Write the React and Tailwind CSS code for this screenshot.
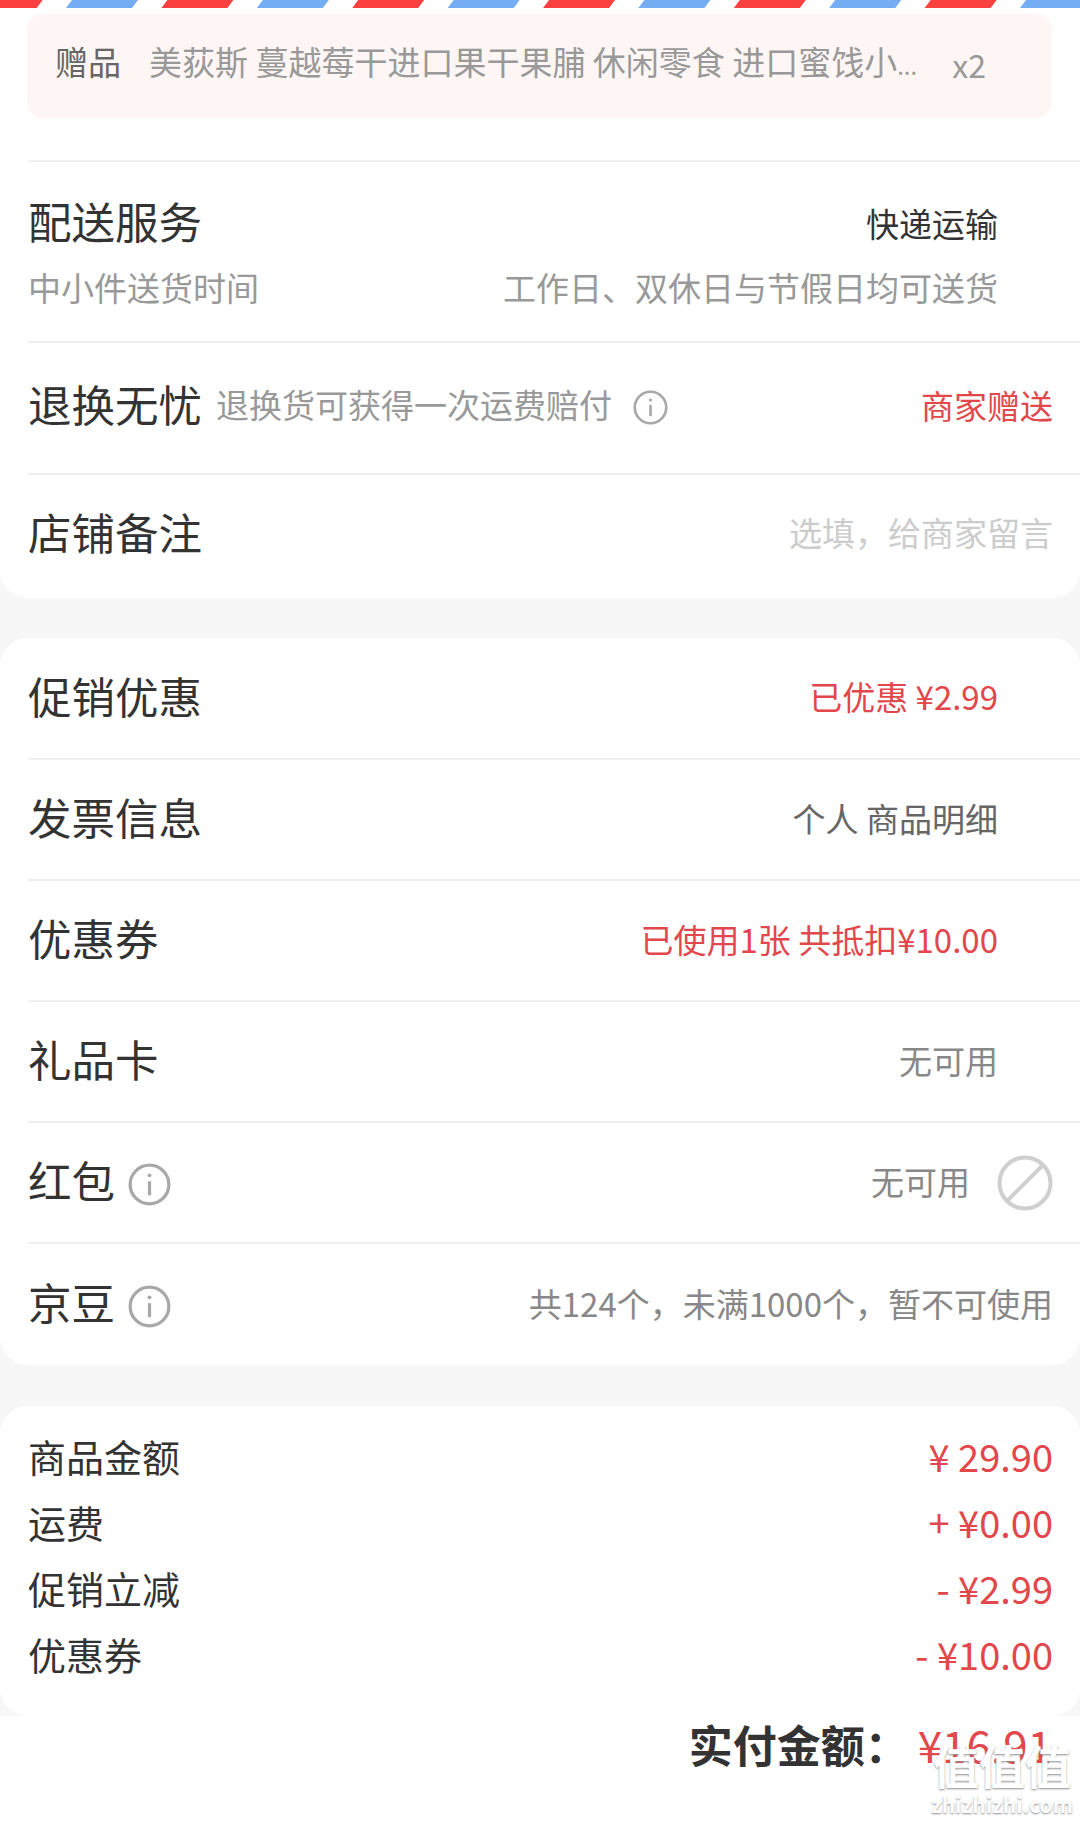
const FONT = "font-['Noto_Sans_CJK_SC','Noto_Sans',sans-serif]";
const RED = "text-[#e2474b]";

function Info({ className = "" }) {
  return (
    <svg viewBox="0 0 40 40" className={className} fill="none" stroke="#a8a8a8">
      <circle cx="20" cy="20" r="18" strokeWidth="3" />
      <path d="M20 17v13" strokeWidth="3" />
      <circle cx="20" cy="11.5" r="1.8" fill="#a8a8a8" stroke="none" />
    </svg>
  );
}

function Banned() {
  return (
    <svg viewBox="0 0 56 56" className="ml-[27px] mt-[3px] h-[56px] w-[56px]" fill="none" stroke="#cfcfcf" strokeWidth="4">
      <circle cx="28" cy="28" r="25.5" />
      <path d="M11 45 45 11" />
    </svg>
  );
}

function Stripes() {
  const items = [];
  for (let i = -1; i < 12; i++) {
    const x = 66 + (i - 1) * 95.4;
    items.push(
      <polygon
        key={i}
        points={`${x},8 ${x + 66},8 ${x + 72},0 ${x + 6},0`}
        fill={i % 2 === 0 ? "#fb4040" : "#74adf3"}
      />
    );
  }
  return (
    <svg viewBox="0 0 1080 8" className="block h-[8px] w-full">
      {items}
    </svg>
  );
}

function Row({ title, titleExtra, value, valueClass = "text-[#888888]", pr = "pr-[82px]", h = "h-[121px]", pb = "pb-[5px]", border = true, children }) {
  return (
    <div className={`ml-[28px] flex items-center justify-between ${h} ${pr} ${pb} ${border ? "border-t-[2px] border-[#efefef]" : ""}`}>
      <div className="flex items-center">
        <span className="text-[43.5px] leading-none text-[#333333]">{title}</span>
        {titleExtra}
      </div>
      <div className="mt-[2px] flex items-center">
        <span className={`text-[33px] leading-none ${valueClass}`}>{value}</span>
        {children}
      </div>
    </div>
  );
}

function Amount({ label, value }) {
  return (
    <div className="flex h-[66px] items-center justify-between">
      <span className="text-[38px] leading-none text-[#333333]">{label}</span>
      <span className={`text-[38px] leading-none ${RED}`}>{value}</span>
    </div>
  );
}

export default function App() {
  const infoIcon = <Info className="ml-[13px] mt-[8px] h-[43px] w-[43px]" />;

  return (
    <div className={`relative h-[1822px] w-[1080px] overflow-hidden bg-[#f7f7f7] ${FONT}`}>
      <div className="rounded-b-[28px] bg-white">
        <Stripes />
        <div className="ml-[27px] mr-[28px] mt-[6px] flex h-[104px] items-center rounded-[16px] bg-[#fdf6f5] pb-[9px] pl-[28px] pr-[66px] text-[33px] leading-none">
          <span className="text-[#666666]">赠品</span>
          <span className="ml-[28px] text-[#999999]">
            美荻斯 蔓越莓干进口果干果脯 休闲零食 进口蜜饯小<span className="text-[24px]">...</span>
          </span>
          <span className="ml-auto mt-[4px] text-[32px] text-[#999999]">x2</span>
        </div>

        <div className="ml-[28px] mt-[42px] h-[181px] border-t-[2px] border-[#efefef] pr-[82px] pt-[29px]">
          <div className="flex items-center justify-between">
            <span className="text-[43.5px] leading-[60px] text-[#333333]">配送服务</span>
            <span className="mt-[4px] text-[33px] leading-none text-[#333333]">快递运输</span>
          </div>
          <div className="mt-[13px] flex items-center justify-between text-[33px] leading-[46px] text-[#999999]">
            <span>中小件送货时间</span>
            <span>工作日、双休日与节假日均可送货</span>
          </div>
        </div>

        <Row
          title="退换无忧"
          h="h-[132px]"
          pb="pb-[8px]"
          pr="pr-[27px]"
          value="商家赠送"
          valueClass={RED}
          titleExtra={
            <>
              <span className="ml-[14px] text-[33px] leading-none text-[#999999]">退换货可获得一次运费赔付</span>
              <Info className="ml-[21px] mt-[7px] h-[35px] w-[35px]" />
            </>
          }
        />
        <Row title="店铺备注" h="h-[125px]" pb="pb-[10px]" pr="pr-[27px]" value="选填，给商家留言" valueClass="text-[#cccccc]" />
      </div>

      <div className="mt-[40px] rounded-[28px] bg-white">
        <Row title="促销优惠" h="h-[120px]" border={false} value="已优惠 ¥2.99" valueClass={RED} />
        <Row title="发票信息" value="个人 商品明细" valueClass="text-[#666666]" />
        <Row title="优惠券" value="已使用1张 共抵扣¥10.00" valueClass={RED} />
        <Row title="礼品卡" value="无可用" />
        <Row title="红包" titleExtra={infoIcon} value="无可用" pr="pr-[27px]">
          <Banned />
        </Row>
        <Row title="京豆" h="h-[123px]" titleExtra={infoIcon} value="共124个，未满1000个，暂不可使用" pr="pr-[27px]" />
      </div>

      <div className="mt-[41px] rounded-[28px] bg-white pb-[29px] pl-[28px] pr-[27px] pt-[17px]">
        <Amount label="商品金额" value="¥ 29.90" />
        <Amount label="运费" value="+ ¥0.00" />
        <Amount label="促销立减" value="- ¥2.99" />
        <Amount label="优惠券" value="- ¥10.00" />
      </div>

      <div className="flex h-[110px] items-start justify-end bg-white pr-[28px] pt-[3px]">
        <span className="text-[44px] font-bold leading-[50px] text-[#333333]">实付金额：</span>
        <span className={`ml-[9px] text-[44px] leading-[50px] ${RED}`}>¥16.91</span>
      </div>

      <div className="absolute right-[7px] top-[1736px] flex flex-col items-center font-bold text-white [text-shadow:0_1px_2px_#8f8f8f]">
        <span className="text-[46px] leading-[56px]">值值值</span>
        <span className="text-[21px] leading-[24px]">zhizhizhi.com</span>
      </div>
    </div>
  );
}
